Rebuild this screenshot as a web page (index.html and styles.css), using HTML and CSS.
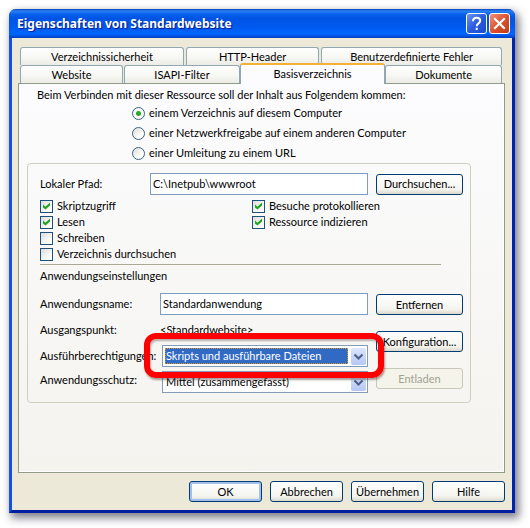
FILE: index.html
```html
<!DOCTYPE html>
<html lang="de">
<head>
<meta charset="utf-8">
<title>Eigenschaften von Standardwebsite</title>
<link rel="stylesheet" href="styles.css">
</head>
<body>
<main class="window">
  <header class="titlebar">
    <h1 class="title">Eigenschaften von Standardwebsite</h1>
    <button class="caption help" type="button" aria-label="Hilfe">
      <svg viewBox="0 0 19 19"><path d="M6 7.2C6 4.8 7.500 3.700 9.600 3.700c2.100 0 3.600 1.200 3.600 3.100 0 2.500-3.500 2.700-3.500 5.400M9.700 13.700v2.200" fill="none" stroke="#fff" stroke-width="2"/></svg>
    </button>
    <button class="caption close" type="button" aria-label="Schließen">
      <svg viewBox="0 0 19 19"><path d="M5 5l9 9M14 5l-9 9" fill="none" stroke="#fff" stroke-width="2.200" stroke-linecap="square"/></svg>
    </button>
  </header>
  <div class="client">
    <nav class="tabs">
      <div class="tab-row back">
        <button class="tab wide" type="button">Verzeichnissicherheit</button>
        <button class="tab medium" type="button">HTTP-Header</button>
        <button class="tab widest" type="button">Benutzerdefinierte Fehler</button>
      </div>
      <div class="tab-row">
        <button class="tab site" type="button">Website</button>
        <button class="tab filter" type="button">ISAPI-Filter</button>
        <button class="tab active" type="button">Basisverzeichnis</button>
        <button class="tab docs" type="button">Dokumente</button>
      </div>
    </nav>
    <section class="panel">
      <p class="intro">Beim Verbinden mit dieser Ressource soll der Inhalt aus Folgendem kommen:</p>
      <div class="sources">
        <label class="option"><input type="radio" name="source" checked>einem Verzeichnis auf diesem Computer</label>
        <label class="option"><input type="radio" name="source">einer Netzwerkfreigabe auf einem anderen Computer</label>
        <label class="option"><input type="radio" name="source">einer Umleitung zu einem URL</label>
      </div>
      <div class="group">
        <div class="path-row">
          <label class="path-label" for="path">Lokaler Pfad:</label>
          <input class="field path" id="path" type="text" value="C:\Inetpub\wwwroot">
          <button class="button" type="button">Durchsuchen...</button>
        </div>
        <div class="checks">
          <div class="check-column">
            <label class="check"><input type="checkbox" checked>Skriptzugriff</label>
            <label class="check"><input type="checkbox" checked>Lesen</label>
            <label class="check"><input type="checkbox">Schreiben</label>
            <label class="check"><input type="checkbox">Verzeichnis durchsuchen</label>
          </div>
          <div class="check-column">
            <label class="check"><input type="checkbox" checked>Besuche protokollieren</label>
            <label class="check"><input type="checkbox" checked>Ressource indizieren</label>
          </div>
        </div>
        <hr class="rule">
        <h2 class="heading">Anwendungseinstellungen</h2>
        <div class="settings">
          <div class="fields">
            <label for="app">Anwendungsname:</label>
            <input class="field" id="app" type="text" value="Standardanwendung">
            <span>Ausgangspunkt:</span>
            <span>&lt;Standardwebsite&gt;</span>
            <label for="rights">Ausführberechtigungen:</label>
            <div class="combo focused">
              <select id="rights"><option>Skripts und ausführbare Dateien</option></select>
              <svg class="arrow" viewBox="0 0 15 17"><path d="M3.500 6.500l4 4 4-4" fill="none" stroke="#4d6185" stroke-width="2.200"/></svg>
              <span class="marker"></span>
            </div>
            <label for="protect">Anwendungsschutz:</label>
            <div class="combo">
              <select id="protect"><option>Mittel (zusammengefasst)</option></select>
              <svg class="arrow" viewBox="0 0 15 17"><path d="M3.500 6.500l4 4 4-4" fill="none" stroke="#4d6185" stroke-width="2.200"/></svg>
            </div>
          </div>
          <div class="actions">
            <button class="button" type="button">Entfernen</button>
            <button class="button" type="button">Konfiguration...</button>
            <button class="button" type="button" disabled>Entladen</button>
          </div>
        </div>
      </div>
    </section>
    <footer class="footer">
      <button class="button default" type="button">OK</button>
      <button class="button" type="button">Abbrechen</button>
      <button class="button" type="button">Übernehmen</button>
      <button class="button" type="button">Hilfe</button>
    </footer>
  </div>
</main>
</body>
</html>
```
FILE: styles.css
```css
* {
  box-sizing: border-box;
}

body {
  margin: 0;
  padding: 9px 15px 15px 9px;
  background: #fff;
  color: #000;
  font: 11px/16px Lato, "Liberation Sans", Arial, sans-serif;
}

button, input, select {
  margin: 0;
  font: inherit;
  color: inherit;
}

.window {
  border: solid;
  border-width: 0 3px 3px;
  border-color: #0831d9 #0023b4 #001ea0 #1650dd;
  border-radius: 7px 7px 0 0;
  background: #ece9d8;
  box-shadow: 3px 4px 9px 1px rgba(40, 40, 60, 0.6);
}

.titlebar {
  display: flex;
  align-items: center;
  gap: 2px;
  height: 29px;
  margin: 0 -3px;
  padding: 0 5px 0 8px;
  border-radius: 7px 7px 0 0;
  background: linear-gradient(#0842b8 0, #2b83f4 2px, #0a62ee 5px, #0054e3 9px, #0058ee 17px, #0066ff 25px, #0048d0 28px, #003cc0 29px);
}

.title {
  flex: 1;
  margin: 0;
  color: #fff;
  font: bold 12px/18px "Noto Sans", "Open Sans", sans-serif;
  text-shadow: 1px 1px 1px #0a1883;
}

.caption {
  width: 21px;
  height: 21px;
  padding: 0;
  border: 1px solid #fff;
  border-radius: 3px;
}

.caption svg {
  display: block;
}

.help {
  background: linear-gradient(135deg, #6d95f2, #2a5ce0 50%, #1c4bd0);
}

.close {
  background: linear-gradient(135deg, #ee9478, #dd5230 50%, #c03a18);
}

.client {
  padding: 9px 7px 8px 6px;
}

.tabs {
  padding: 0 3px 0 2px;
}

.tab-row {
  display: flex;
}

.back {
  gap: 2px;
}

.tab {
  height: 18px;
  padding: 0;
  border: 1px solid #91a7b4;
  border-bottom: 0;
  border-radius: 3px 3px 0 0;
  background: linear-gradient(#fff, #f6f6f2 60%, #ecebe4);
}

.wide {
  flex: 164 1 0;
}

.medium {
  flex: 133 1 0;
}

.widest {
  flex: 181 1 0;
}

.site {
  flex: 103 1 0;
  margin-right: 1px;
}

.filter {
  flex: 116 1 0;
}

.active {
  flex: 146 1 0;
  z-index: 1;
  height: 21px;
  margin: -2px 0 -1px;
  padding-bottom: 2px;
  border-top: 2px solid #f3b13a;
  background: #fcfcfe;
}

.docs {
  flex: 117 1 0;
}

.panel {
  padding: 3px 33px 69px 8px;
  border: 1px solid #919b8c;
  background: linear-gradient(#fcfcfe, #f4f3ee);
  box-shadow: inset -1px -1px #fff;
}

.intro {
  margin: 0 10px;
}

.sources {
  display: flex;
  flex-direction: column;
  padding-left: 105px;
}

.option {
  display: flex;
  align-items: center;
  gap: 4px;
  height: 20px;
}

.option input {
  appearance: none;
  width: 13px;
  height: 13px;
  border: 1px solid #3b6487;
  border-radius: 50%;
  background: linear-gradient(135deg, #dcdcd6, #fff 70%);
}

.option input:checked {
  background: radial-gradient(circle, #27a827 0 2px, #f8f8f6 3px);
}

.group {
  padding: 9px 7px 9px 12px;
  border: 1px solid #cfcfbf;
  border-radius: 4px;
}

.path-row {
  display: flex;
  align-items: center;
}

.path-label {
  width: 110px;
}

.field {
  min-width: 0;
  height: 22px;
  padding: 0 2px 1px;
  border: 1px solid #7f9db9;
  background: #fff;
}

.path {
  flex: 1;
  margin-right: 8px;
}

.button {
  width: 87px;
  height: 21px;
  padding: 0;
  border: 1px solid #003c74;
  border-radius: 3px;
  background: linear-gradient(#fff, #f4f4ef 75%, #dcd9cc);
}

.button:disabled {
  border-color: #c9c7ba;
  background: #f5f4ea;
  color: #a1a192;
}

.default {
  box-shadow: inset 0 0 0 2px #a2c0ee;
}

.checks {
  display: grid;
  grid-template-columns: 212px 1fr;
  margin-top: 3px;
}

.check {
  display: flex;
  align-items: center;
  gap: 4px;
  height: 16px;
}

.check input {
  appearance: none;
  display: grid;
  place-items: center;
  width: 13px;
  height: 13px;
  border: 1px solid #1c5180;
  background: linear-gradient(135deg, #dcdcd7, #fff 80%);
}

.check input:checked::before {
  content: "";
  width: 7px;
  height: 7px;
  background: #21a121;
  clip-path: polygon(0 28%, 35% 60%, 100% 0, 100% 42%, 35% 100%, 0 70%);
}

.rule {
  height: 1px;
  margin: 2px 22px 3px 0;
  border: 0;
  background: #aca899;
}

.heading {
  margin: 0 0 9px;
  font: inherit;
}

.settings {
  display: flex;
  gap: 8px;
}

.fields {
  flex: 1;
  display: grid;
  grid-template-columns: 120px 1fr;
  grid-template-rows: 22px 30px 22px 26px;
  align-items: center;
}

.combo {
  position: relative;
  display: flex;
  align-items: center;
  height: 22px;
  margin-left: 2px;
  padding: 2px 1px 2px 2px;
  border: 1px solid #7f9db9;
  background: #fff;
}

.combo:last-child {
  align-self: end;
}

.combo select {
  appearance: none;
  flex: 1;
  min-width: 0;
  height: 16px;
  margin-right: 3px;
  padding: 0 1px;
  border: 0;
  background: #fff;
}

.combo.focused select {
  background: #316ac5;
  color: #fff;
  outline: 1px dotted #ce953a;
  outline-offset: -1px;
}

.arrow {
  width: 15px;
  height: 17px;
  border-radius: 2px;
  background: linear-gradient(#dce6fd, #b5c7f5);
  pointer-events: none;
}

.marker {
  position: absolute;
  inset: -13px -17px -12px -19px;
  z-index: 1;
  border: 6px solid #fe0000;
  border-radius: 12px;
  box-shadow: 1px 2px 2px rgba(90, 60, 60, 0.5), inset 1px 2px 2px rgba(90, 60, 60, 0.4);
  pointer-events: none;
}

.actions {
  display: flex;
  flex-direction: column;
  gap: 16px;
  padding-top: 1px;
}

.footer {
  display: flex;
  justify-content: flex-end;
  gap: 8px;
  padding-top: 8px;
}

.footer .button {
  width: 73px;
}
```
